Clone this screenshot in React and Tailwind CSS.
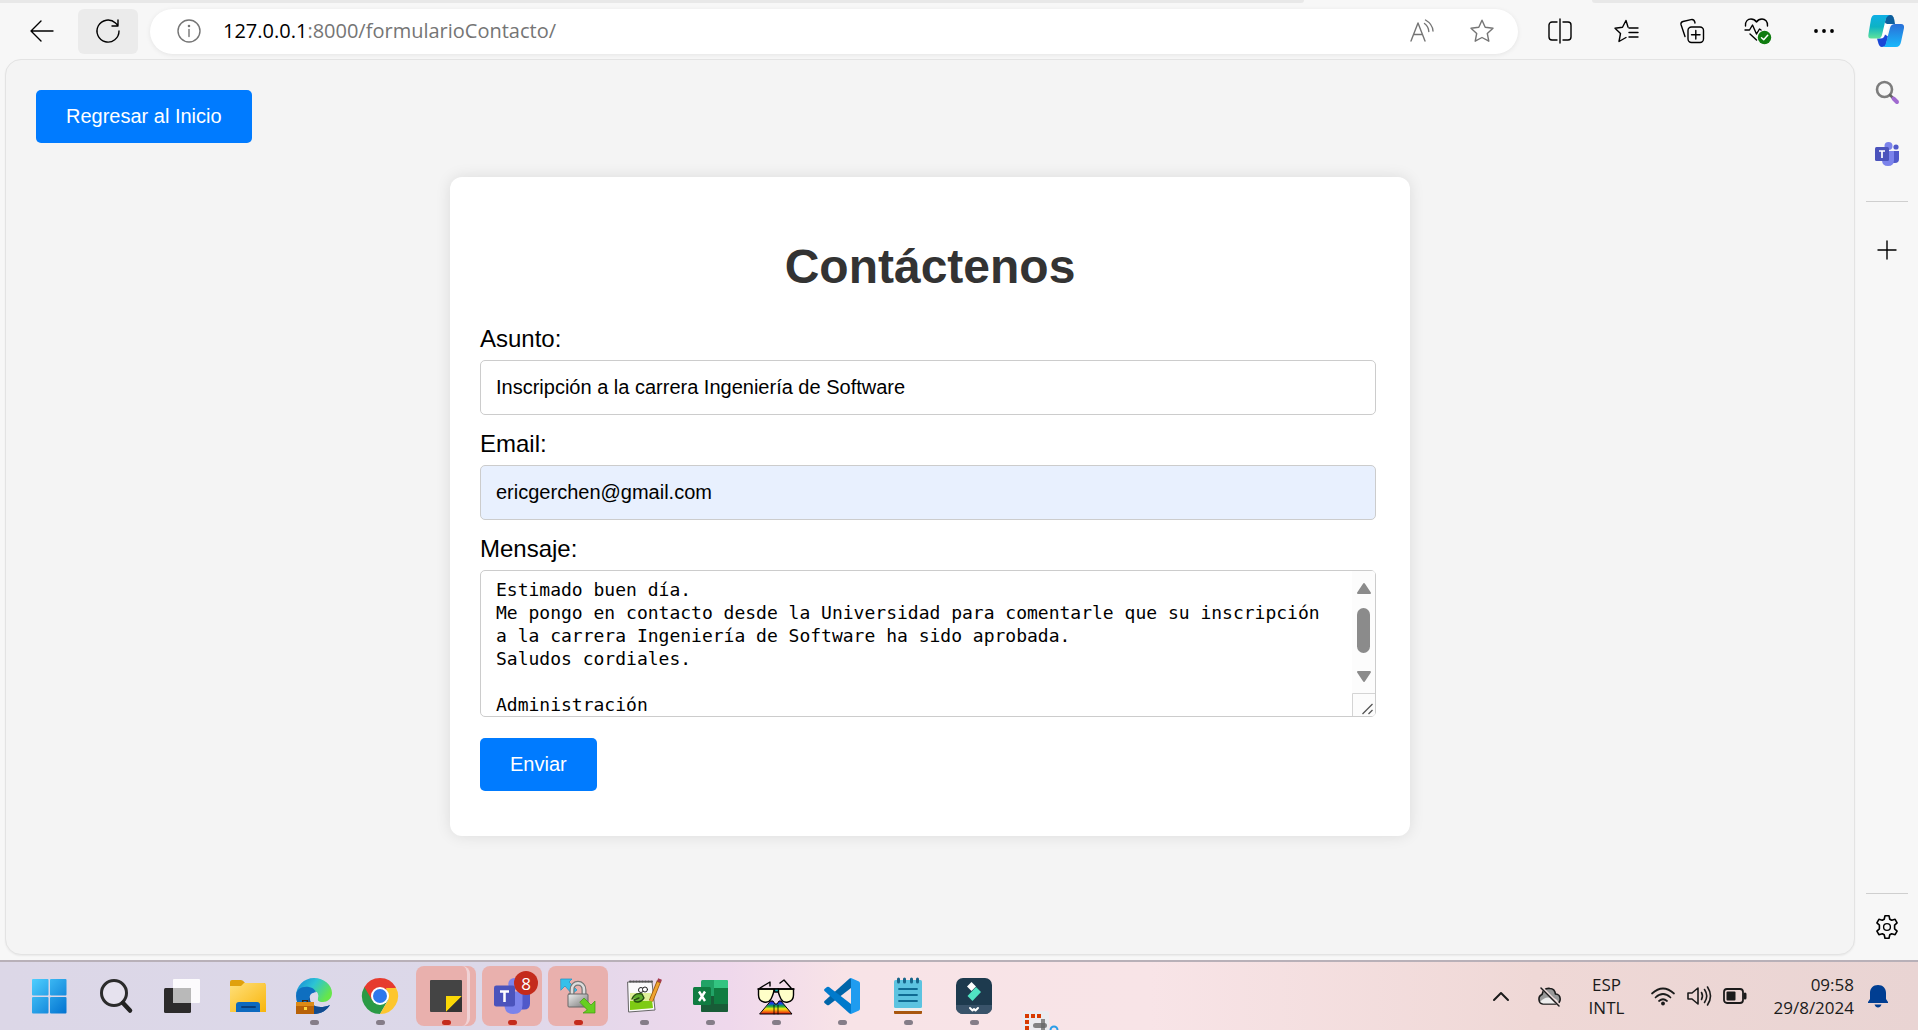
const Svg = ({ size = 24, box = '0 0 24 24', children, className = '' }) => (
  <svg width={size} height={size} viewBox={box} fill="none" stroke="currentColor" strokeWidth="1.4" strokeLinecap="round" strokeLinejoin="round" className={`shrink-0 overflow-visible ${className}`} aria-hidden="true">
    {children}
  </svg>
)

const STAR = 'M12 1.2 15.2 8.3 23 9.2 17.3 14.5 18.8 22.2 12 18.5 5.2 22.2 6.7 14.5 1 9.2 8.8 8.3Z'

const BackIcon = () => <Svg><path d="M23 12H1M11 2 1 12l10 10" /></Svg>
const ReloadIcon = () => <Svg><path d="M23 12A11 11 0 1 1 19.5 4L22 6.5M22 1v6h-6" /></Svg>
const InfoIcon = () => <Svg><circle cx="12" cy="12" r="11" /><path d="M12 10.5v7" /><circle cx="12" cy="7" r=".6" fill="currentColor" /></Svg>
const ReadAloudIcon = () => <Svg><path d="M1 22 8 4l7 18M3.7 15.500h8.600M14.500 4.500q4 3 4.300 8M15.500 1q7 4 7.500 11" /></Svg>
const StarIcon = () => <Svg><path d={STAR} /></Svg>
const SplitIcon = () => <Svg><path d="M12 0v24M9 3H4a3 3 0 0 0-3 3v12a3 3 0 0 0 3 3h5M15 3h5a3 3 0 0 1 3 3v12a3 3 0 0 1-3 3h-5" /></Svg>
const FavoritesIcon = () => <Svg><path d="M14 8 12 1.500 8.500 8.300 1 9.200l5.500 5.300L5 22.500l7-4M15 9h9M15 13.500h9M15 18h9" /></Svg>
const CollectionsIcon = () => <Svg><rect x="8" y="8" width="15.500" height="15.500" rx="3.500" /><path d="M15.800 11.500v8.500M11.500 15.800H20M5 17.500 1 5.500Q.5 3.300 3 2.500L11 .6Q14 0 14.800 3L15 4" /></Svg>
const HealthIcon = () => (
  <Svg size={28} box="0 0 28 28">
    <path d="M1.500 9C1 4 4 2 7 2c3 0 4.500 1.500 5.500 3C13.500 3.500 15 2 18 2s6 2.500 5.500 7M1 13h4.500L8.500 8l4 9 3-5 1.500 1M6 17l6.500 6" />
    <circle cx="20.500" cy="20.500" r="6.700" fill="#107c10" stroke="none" />
    <path d="m17.500 20.800 2.200 2 4-4.500" stroke="#fff" strokeWidth="1.500" />
  </Svg>
)
const DotsIcon = () => <Svg><g fill="currentColor" stroke="none"><circle cx="4" cy="12" r="1.900" /><circle cx="12" cy="12" r="1.900" /><circle cx="20" cy="12" r="1.900" /></g></Svg>
const CopilotIcon = () => (
  <Svg size={36} box="0 0 36 36">
    <defs>
      <linearGradient id="cpA" x1="0" y1="0" x2="0" y2="1"><stop offset="0" stopColor="#0fafe6" /><stop offset=".5" stopColor="#0db3c4" /><stop offset="1" stopColor="#5fe39a" /></linearGradient>
      <linearGradient id="cpB" x1="0" y1="0" x2="0" y2="1"><stop offset="0" stopColor="#2a6fd8" /><stop offset="1" stopColor="#18b8fb" /></linearGradient>
    </defs>
    <g stroke="none">
      <path d="M17 11h6q-2 0-3 4l-3 10.500h-6Z" fill="#fff" />
      <path d="M18 2h5q3 0 4 9h-6q-4 0-4-2Z" fill="#0d5f9e" />
      <path d="M9 25.500h4q3 0 4-4l3 2-2 8q-1 2.500-4 2.500-3 0-4-5Z" fill="#1a47d6" />
      <path d="M6.500 2H22Q18 3 17 9l-3 13q-1 3.500-4 3.500H3Q-.5 25.500.5 21L3 6q1-4 3.500-4Z" fill="url(#cpA)" />
      <path d="M27 11h6q3.500 0 3 4l-3 14q-1 5-5 5H14q3 0 4-4l4-15q1-4 5-4Z" fill="url(#cpB)" />
    </g>
  </Svg>
)
const SideSearchIcon = () => <Svg><circle cx="9.500" cy="9.500" r="7.500" stroke="#7d7d7d" strokeWidth="2.600" /><path d="m15 15 3 3" stroke="#666" strokeWidth="2.500" /><path d="m18.500 18.500 3.500 3.500" stroke="#a06ad0" strokeWidth="4" /></Svg>
const TeamsIcon = ({ size = 24 }) => (
  <Svg size={size}>
    <g stroke="none">
      <circle cx="21" cy="5" r="2.600" fill="#5059c9" /><path d="M16 9h8v8q0 4-4 4h-4Z" fill="#5059c9" />
      <circle cx="13.500" cy="4" r="4" fill="#7b83eb" /><path d="M7 9h12v9q0 6-6 6t-6-6Z" fill="#7b83eb" />
      <rect x="0" y="5" width="14" height="14" rx="1.500" fill="#4b53bc" />
    </g>
    <path d="M4 9h6M7 9v7" stroke="#fff" strokeWidth="1.700" strokeLinecap="butt" />
  </Svg>
)
const PlusIcon = () => <Svg><path d="M12 3v18M3 12h18" /></Svg>
const GearIcon = () => (
  <Svg><circle cx="12" cy="12" r="3.400" /><path strokeWidth="1.600" d="M10 .8h4l.8 3.400 1.900 1.100 3.400-1 2 3.500-2.500 2.400v3.600l2.500 2.400-2 3.500-3.400-1-1.900 1.100L14 23.200h-4l-.8-3.400-1.900-1.100-3.400 1-2-3.500 2.500-2.400v-3.600L1.900 7.800l2-3.500 3.400 1 1.900-1.100Z" /></Svg>
)

const StartIcon = () => (
  <Svg size={36} box="0 0 36 36">
    <defs><linearGradient id="win" gradientUnits="userSpaceOnUse" x1="0" y1="0" x2="36" y2="36"><stop stopColor="#4fd0ff" /><stop offset="1" stopColor="#0070cf" /></linearGradient></defs>
    <g fill="url(#win)" stroke="none"><rect x="0" y="1" width="16.500" height="16.500" rx="1" /><rect x="18" y="1" width="16.500" height="16.500" rx="1" /><rect x="0" y="19" width="16.500" height="16.500" rx="1" /><rect x="18" y="19" width="16.500" height="16.500" rx="1" /></g>
  </Svg>
)
const TaskSearchIcon = () => <Svg size={36} box="0 0 36 36"><circle cx="16" cy="15" r="12.500" stroke="#2b2b2b" strokeWidth="3" fill="#e6e2ee" /><path d="m25 25 7 7.500" stroke="#222" strokeWidth="4.500" /></Svg>
const TaskViewIcon = () => <Svg size={36} box="0 0 36 36"><g stroke="none"><rect x="0" y="10" width="27" height="25" rx="1.500" fill="#2c2b2b" /><rect x="9" y="1" width="27" height="24" rx="1" fill="#fff" opacity=".9" /><path d="M9 10h18v15H9Z" fill="#b9b9b9" /></g></Svg>
const ExplorerIcon = () => (
  <Svg size={36} box="0 0 36 36">
    <defs><linearGradient id="fol" x1="0" y1="0" x2="1" y2="1"><stop stopColor="#ffe07a" /><stop offset="1" stopColor="#f8b50c" /></linearGradient></defs>
    <g stroke="none"><path d="M0 4q0-2 2-2h9q2 0 4 3h20v5H0Z" fill="#e0a10c" /><path d="M0 8h11l3-3h20q2 0 2 2v27H0Z" fill="url(#fol)" /><path d="M6 34V27q0-3 3-3h18q3 0 3 3v7Z" fill="#0c69bf" /></g><path d="M12 29h13" stroke="#083e7c" strokeWidth="2" />
  </Svg>
)
const EdgeIcon = () => (
  <Svg size={36} box="0 0 36 36">
    <defs><linearGradient id="edg" x1="0" y1="0" x2="1" y2=".5"><stop stopColor="#1683d8" /><stop offset=".5" stopColor="#2cc3d5" /><stop offset="1" stopColor="#66e64a" /></linearGradient></defs>
    <g stroke="none">
      <path d="M0 18C0 8 8 0 18 0s18 7 18 15c0 6-5 9-9 9-5 0-6-2-5-4 1-3-1-8-8-9C6 10 0 14 0 18Z" fill="url(#edg)" />
      <path d="M0 18c0-7 6-10 13-9 5 1 7 4 7 6-5-1-7 3-6 6 0 6 8 11 20 6-3 5-9 9-16 9C8 36 0 28 0 18Z" fill="#0f6fc0" />
      <path d="M14 19c-2 8 8 13 20 8-3 5-9 9-16 9-5-3-8-11-4-17Z" fill="#114b8f" />
      <path d="M21 14c-4 0-6 3-5 6 1 3 4 5 8 5q-3-2-2-5 1-3-1-6Z" fill="#ded9e9" />
      <rect x="0" y="24" width="18" height="12" fill="#b86208" /><rect x="0" y="24" width="18" height="4" fill="#dd8a15" /><rect x="8" y="29" width="3" height="3" fill="#ffd63c" />
      <path d="M6 24v-2h6v2h-1.500v-1h-3v1Z" fill="#3c2411" />
    </g>
  </Svg>
)
const ChromeIcon = () => (
  <Svg size={36} box="0 0 36 36">
    <g stroke="none">
      <path d="M18 18 2.400 9A18 18 0 0 1 33.600 9Z" fill="#e63b2e" /><path d="M2.400 9A18 18 0 0 0 18 36l8-14-8-4Z" fill="#2a9a45" /><path d="M33.600 9A18 18 0 0 1 18 36l8-13.500L24 9Z" fill="#fdc62d" />
      <path d="M2.400 9 10.200 22.500 18 10h15.600V9L18 4Z" fill="#e63b2e" /><circle cx="18" cy="18" r="9" fill="#fff" /><circle cx="18" cy="18" r="7" fill="#2f78ec" />
    </g>
  </Svg>
)
const StickyIcon = () => <Svg size={36} box="0 0 36 36"><g stroke="none"><rect x="2" y="2" width="32" height="32" rx="1" fill="#444" /><path d="M18 18h16L18 34Z" fill="#fbd806" /><path d="M34 18v16H18Z" fill="#333" /></g></Svg>
const LockIcon = () => (
  <Svg size={36} box="0 0 36 36">
    <defs><linearGradient id="lck" x1="0" y1="0" x2="1" y2="1"><stop stopColor="#eee" /><stop offset="1" stopColor="#777" /></linearGradient></defs>
    <path d="M1 1h11L9 4l8 8-5 4-7-8-4 4Z" fill="#35c0ea" stroke="#1a91c4" strokeWidth=".7" />
    <path d="M12 17v-5c0-9 12-9 12 0v5" stroke="#777" strokeWidth="5" /><path d="M12 17v-5c0-9 12-9 12 0v5" stroke="#ddd" strokeWidth="2.500" />
    <rect x="8" y="16" width="20" height="13" rx="1" fill="url(#lck)" stroke="#666" strokeWidth="1" />
    <path d="m20 24 4-4 7 7 4-4v12H23l4-3Z" fill="#66cf20" stroke="#409810" strokeWidth=".7" />
  </Svg>
)
const NotepadPlusIcon = () => (
  <Svg size={36} box="0 0 36 36">
    <path d="M2 4h24l3 28-26 2Z" fill="#fafafa" stroke="#666" strokeWidth="1" /><path d="M4 3.500h22" stroke="#555" strokeWidth="2" strokeDasharray="1 2" />
    <path d="M4 15h21l2 15-23 2Z" fill="#dff09a" stroke="none" /><path d="M4 23h22l1 7-23 2Z" fill="#7ecb14" stroke="none" />
    <path d="M6 21c2-5 6-6 10-5l2 4c-3 5-9 5-10 2l5-2" fill="#5fae2c" stroke="#264d10" />
    <circle cx="15" cy="12" r="2.500" fill="#fff" stroke="#222" strokeWidth="1" /><circle cx="19" cy="11.500" r="2.500" fill="#fff" stroke="#222" strokeWidth="1" />
    <path d="M33 3 25 23" stroke="#9a5a10" strokeWidth="4.500" strokeLinecap="butt" /><path d="M32.500 4.500 25 23" stroke="#f0a530" strokeWidth="2.800" strokeLinecap="butt" /><path d="m34 1-1 3" stroke="#a43b4c" strokeWidth="4" strokeLinecap="butt" />
  </Svg>
)
const ExcelIcon = () => (
  <Svg size={36} box="0 0 36 36">
    <g stroke="none"><rect x="9" y="2" width="27" height="32" rx="1.500" fill="#21a366" /><path d="M22 2h12.500q1.500 0 1.500 1.500V10H22Z" fill="#33c481" /><path d="M9 18h13v8H9ZM22 10h14v8H22Z" fill="#107c41" /><path d="M9 18h27v14.500q0 1.500-1.500 1.500h-24Q9 34 9 32.500Z" fill="#185c37" /><path d="M22 18h14v8H22Z" fill="#107c41" /><rect x="1" y="9" width="18" height="18" rx="1.500" fill="#107c41" /></g>
    <path d="m7 13.500 6 9.500M13 13.500 7 23" stroke="#fff" strokeWidth="2.400" strokeLinecap="butt" />
  </Svg>
)
const GlassesIcon = () => (
  <Svg size={36} box="0 0 36 36">
    <defs><linearGradient id="rain" x1="0" y1="0" x2="0" y2="1"><stop stopColor="#4b12b8" /><stop offset=".2" stopColor="#1247e8" /><stop offset=".4" stopColor="#18a83a" /><stop offset=".6" stopColor="#f5ea14" /><stop offset=".8" stopColor="#f47a10" /><stop offset="1" stopColor="#e01010" /></linearGradient></defs>
    <path d="M.5 11H16q0 4-3 10-2 4-7 3-5.500-1-5.500-7ZM20 11h15.500v6q0 6-5.500 7-5 1-7-3-3-6-3-10Z" fill="#ffffc8" stroke="#000" /><path d="M0 11h36M2 10 12 4v4M33 10 26 2l-4 3" stroke="#000" />
    <rect x="16.500" y="11" width="4" height="3" fill="#1bb" stroke="#000" />
    <path d="M13 23h2l2 3h2l2-3h2l11 13H2Z" fill="url(#rain)" stroke="#000" strokeWidth="1" /><path d="M16 27v9M20 27v9" stroke="#000" strokeWidth=".8" />
  </Svg>
)
const VsCodeIcon = () => <Svg size={36} box="0 0 36 36"><g stroke="none"><path d="M27 0v10L5 27q-1 .5-2 0l-2.500-2q-1-1 0-2L25 1Z" fill="#0065a9" /><path d="M27 36V26L5 9q-1-.5-2 0L.5 11q-1 1 0 2L25 35Z" fill="#007acc" /><path d="m27 0 8 3.500q1 .5 1 2v25q0 1.500-1 2L27 36q-1 0-2-1 2 1 2-1V2q0-2-2-1 1-1 2-1Z" fill="#1f9cf0" /></g></Svg>
const NotepadIcon = () => <Svg size={36} box="0 0 36 36"><g stroke="none"><rect x="4" y="28" width="28" height="8" rx="1" fill="#a9560e" /><rect x="4" y="27" width="28" height="6" fill="#eee" /><rect x="4" y="2" width="28" height="28" rx="1.500" fill="#5cc3e0" /></g><path d="M9 11h18M9 17h18M9 23h18" stroke="#0f6b93" strokeWidth="1.800" /><path d="M8.500 1v3M14.500 1v3M21.500 1v3M27.500 1v3" stroke="#17658a" strokeWidth="3" /></Svg>
const FilmoraIcon = () => <Svg size={36} box="0 0 36 36"><g stroke="none"><rect width="36" height="36" rx="7" fill="#1d3a4e" /><path d="M0 27h36v2a7 7 0 0 1-7 7H7a7 7 0 0 1-7-7Z" fill="#39536a" /><path d="m11 8.500 4.500-4.500L20 8.500 15.500 13Z" fill="#fff" /><path d="m11.500 18 8.500-9 5 5-8.500 9Z" fill="#50e3c2" /></g><path d="m14 30 2.500 2.500L18 31l1.500 1.500L22 30" stroke="#fff" strokeWidth="2" /></Svg>
const SnipIcon = () => <Svg size={36} box="0 0 36 36"><rect x="0" y="0" width="27" height="30" rx="2" fill="#ebebef" stroke="none" /><path d="M3 5h17" stroke="#d83b01" strokeWidth="4" strokeDasharray="4 2" strokeLinecap="butt" /><path d="M5 9v12" stroke="#d83b01" strokeWidth="4" strokeDasharray="4 2" strokeLinecap="butt" /><path d="M21 8v14" stroke="#888" strokeWidth="4" strokeLinecap="butt" /><circle cx="32" cy="19" r="3.500" stroke="#2b9de8" strokeWidth="2" /></Svg>

const ChevronIcon = () => <Svg size={18} box="0 0 18 18"><path d="m2 13 7-7 7 7" strokeWidth="2" /></Svg>
const CloudOffIcon = () => <Svg><path d="M6 20a5 5 0 0 1-1-9.500C6 6 9 4 13 4.500c3 0 5 2.500 5.500 5.500 6 0 6.500 10 0 10Z" fill="#999" stroke="#1b1b1b" strokeWidth="1.600" /><path d="M3 18q5-6 11-4 6 0 7 4-1 1.500-3 1.500H6Z" fill="#eee" stroke="none" /><path d="m5 4 17 17" stroke="#eddada" strokeWidth="3" /><path d="m4 4 18 18" stroke="#1b1b1b" strokeWidth="1.500" /></Svg>
const WifiIcon = () => <Svg><path strokeWidth="1.700" d="M1 9.500q11-10 22 0M4.500 13.500q7.500-7 15 0M8 17q4-3.500 8 0" /><circle cx="12" cy="19.500" r="1.900" fill="currentColor" stroke="none" /></Svg>
const VolumeIcon = () => <Svg><path strokeWidth="1.600" d="M1 9v6h4l6 5V4L5 9ZM14.500 8.500q2 3.500 0 7M17.500 5.500q4.500 6.500 0 13M20.500 3q6 9 0 18" /></Svg>
const BatteryIcon = () => <Svg><rect x="1" y="5" width="19" height="14" rx="3" strokeWidth="1.800" /><rect x="3.500" y="7.500" width="9" height="9" rx="1" fill="currentColor" stroke="none" /><path d="M22 10v4" strokeWidth="3" /></Svg>
const BellIcon = () => <Svg className="text-[#003e92]"><g fill="currentColor" stroke="none"><path d="M12 1c5 0 8 3.500 8 8v6l2 3v1H2v-1l2-3V9c0-4.500 3-8 8-8Z" /><path d="M8.500 20.500h7q-1 3-3.500 3t-3.500-3Z" /></g></Svg>

const toolbarItems = [
  ['Pantalla dividida', SplitIcon],
  ['Favoritos', FavoritesIcon],
  ['Colecciones', CollectionsIcon],
  ['Estado del explorador', HealthIcon],
  ['Configuración y más', DotsIcon],
]

const taskItems = [
  { name: 'Inicio', Icon: StartIcon },
  { name: 'Buscar', Icon: TaskSearchIcon },
  { name: 'Vista de tareas', Icon: TaskViewIcon },
  { name: 'Explorador de archivos', Icon: ExplorerIcon },
  { name: 'Edge', Icon: EdgeIcon, open: true },
  { name: 'Chrome', Icon: ChromeIcon, open: true },
  { name: 'Notas', Icon: StickyIcon, open: true, alert: true, stacked: true },
  { name: 'Teams', Icon: () => <TeamsIcon size={36} />, open: true, alert: true, badge: '8' },
  { name: 'Conexión segura', Icon: LockIcon, open: true, alert: true },
  { name: 'Notepad++', Icon: NotepadPlusIcon, open: true },
  { name: 'Excel', Icon: ExcelIcon, open: true },
  { name: 'Lector', Icon: GlassesIcon, open: true },
  { name: 'Visual Studio Code', Icon: VsCodeIcon, open: true },
  { name: 'Bloc de notas', Icon: NotepadIcon, open: true },
  { name: 'Filmora', Icon: FilmoraIcon, open: true },
]

const MESSAGE = `Estimado buen día.
Me pongo en contacto desde la Universidad para comentarle que su inscripción a la carrera Ingeniería de Software ha sido aprobada.
Saludos cordiales.

Administración`

function Toolbar() {
  return (
    <header className="flex h-14 items-center pl-3">
      <button aria-label="Atrás" className="flex h-[45px] w-[60px] items-center justify-center"><BackIcon /></button>
      <button aria-label="Actualizar" className="ml-1.5 flex h-[45px] w-[60px] items-center justify-center rounded-md bg-[#ebebeb]"><ReloadIcon /></button>
      <div className="ml-3 flex h-[45px] min-w-0 flex-1 items-center rounded-full bg-white pr-6 pl-[27px] text-[#757575] shadow-[0_1px_5px_rgba(0,0,0,0.08)]">
        <InfoIcon />
        <div className="ml-[22px] flex-1 font-['Open_Sans',sans-serif] text-[20px] leading-6"><span className="text-black">127.0.0.1</span>:8000/formularioContacto/</div>
        <button aria-label="Leer en voz alta"><ReadAloudIcon /></button>
        <button aria-label="Agregar a favoritos" className="ml-9"><StarIcon /></button>
      </div>
      <div className="ml-3 flex gap-1.5">
        {toolbarItems.map(([name, Icon]) => (
          <button key={name} aria-label={name} className="flex h-[45px] w-[60px] items-center justify-center"><Icon /></button>
        ))}
      </div>
      <button aria-label="Copilot" className="flex h-[45px] w-[64px] items-center justify-center"><CopilotIcon /></button>
    </header>
  )
}

function Sidebar() {
  return (
    <aside className="flex w-[63px] flex-col items-center pt-[21px] pb-4">
      <button aria-label="Buscar en la barra lateral"><SideSearchIcon /></button>
      <button aria-label="Teams" className="mt-[38px]"><TeamsIcon /></button>
      <hr className="mt-[35px] w-[42px] border-[#cfcfcf]" />
      <button aria-label="Agregar" className="mt-9"><PlusIcon /></button>
      <hr className="mt-auto w-[42px] border-[#cfcfcf]" />
      <button aria-label="Configuración" className="mt-[21px]"><GearIcon /></button>
    </aside>
  )
}

function TextField({ id, label, type = 'text', value, className }) {
  return (
    <>
      <label htmlFor={id} className="text-2xl leading-7">{label}</label>
      <input id={id} type={type} defaultValue={value} className={`mt-[7px] mb-[15px] h-[55px] rounded-[5px] border border-[#ccc] px-[15px] text-[20px] outline-none ${className}`} />
    </>
  )
}

function ContactForm() {
  return (
    <form onSubmit={(e) => e.preventDefault()} className="mx-auto mt-[34px] flex w-full max-w-[960px] flex-col rounded-xl bg-white pt-[62px] pr-[34px] pb-[45px] pl-[30px] shadow-[0_0_15px_rgba(0,0,0,0.1)]">
      <h1 className="mb-[30px] ml-1 text-center text-[48px] leading-[56px] font-bold text-[#333]">Contáctenos</h1>
      <TextField id="asunto" label="Asunto:" value="Inscripción a la carrera Ingeniería de Software" className="bg-white" />
      <TextField id="email" label="Email:" type="email" value="ericgerchen@gmail.com" className="bg-[#e8f0fe]" />
      <label htmlFor="mensaje" className="text-2xl leading-7">Mensaje:</label>
      <div className="relative mt-[7px] flex">
        <textarea id="mensaje" defaultValue={MESSAGE} className="h-[147px] w-full resize-none overflow-hidden rounded-[5px] border border-[#ccc] pt-[7px] pr-[42px] pl-[15px] font-['DejaVu_Sans_Mono',monospace] text-[18px] leading-[23px] outline-none" />
        <svg className="absolute top-px right-px" width="23" height="145" viewBox="0 0 23 145" aria-hidden="true">
          <path d="M0 0h20q3 0 3 3v139q0 3-3 3H0Z" fill="#fcfcfc" />
          <path d="M12 13 18 22H6ZM12 110 18 101H6Z" fill="#8b8b8b" stroke="#8b8b8b" strokeWidth="2" strokeLinejoin="round" />
          <rect x="5" y="37" width="13" height="45" rx="6.500" fill="#8b8b8b" />
          <path d="M.5 145V122.500H23" fill="none" stroke="#d4d4d4" />
          <path d="m10.500 143 10-10M16.500 143l4-4" stroke="#555" strokeWidth="1.300" />
        </svg>
      </div>
      <button type="submit" className="mt-[21px] self-start rounded-[5px] bg-[#007bff] px-[30px] text-[20px] leading-[53px] text-white">Enviar</button>
    </form>
  )
}

function TaskButton({ name, Icon, open, alert, stacked, badge }) {
  return (
    <button aria-label={name} className={`relative flex h-[60px] w-[60px] shrink-0 items-center justify-center rounded-lg ${alert ? 'bg-[#e9b0ad]' : ''}`}>
      {stacked && <span className="absolute inset-y-0 left-0 w-[54px] rounded-lg border-r-3 border-[#f0d3d6]" />}
      <Icon />
      {badge && <span className="absolute top-[5px] right-1 flex size-6 items-center justify-center rounded-full bg-[#c42b1c] font-['Open_Sans',sans-serif] text-[17px] leading-none text-white">{badge}</span>}
      {open && <span className={`absolute bottom-px left-[26px] h-[5px] w-[9px] rounded-full ${alert ? 'bg-[#c42b1c]' : 'bg-[#857d88]'}`} />}
    </button>
  )
}

function Taskbar() {
  return (
    <footer className="flex h-[70px] shrink-0 items-start justify-between overflow-hidden border-t-2 border-[#b8b0b8] bg-[linear-gradient(90deg,#dcd7e7_0%,#dcd8e9_25%,#efd8ec_38%,#f8e3e7_44%,#f8e4e7_60%,#efd8d6_80%,#e9d4d3_100%)] pt-1 pl-5 font-['Open_Sans',sans-serif] text-[#1b1b1b]">
      <nav className="flex gap-1.5">
        {taskItems.map((item) => <TaskButton key={item.name} {...item} />)}
        <button aria-label="Recortes" className="relative mt-[45px] ml-3 flex h-9"><SnipIcon /><span className="absolute top-3 left-[11px] h-[5px] w-[14px] rounded-full bg-[#666]/80" /></button>
      </nav>
      <div className="flex h-[60px] items-center pr-7 text-[17px] leading-[23px]">
        <button aria-label="Mostrar iconos ocultos"><ChevronIcon /></button>
        <span className="ml-[27px]"><CloudOffIcon /></span>
        <button className="ml-[27px] w-9 text-center">ESP INTL</button>
        <button aria-label="Red, volumen y batería" className="ml-[27px] flex gap-3"><WifiIcon /><VolumeIcon /><BatteryIcon /></button>
        <time className="ml-[26px] flex flex-col text-right"><span>09:58</span><span>29/8/2024</span></time>
        <button aria-label="Notificaciones" className="ml-3"><BellIcon /></button>
      </div>
    </footer>
  )
}

export default function App() {
  return (
    <div className="flex h-screen flex-col overflow-hidden bg-[#f7f7f7] font-['Liberation_Sans',Arial,sans-serif] text-black">
      <div className="flex h-[3px] shrink-0 justify-between">
        <span className="w-[68%] rounded-br-full bg-[#e8e8e8]" />
        <span className="w-[17%] rounded-bl-full bg-[#e8e8e8]" />
      </div>
      <Toolbar />
      <div className="flex min-h-0 flex-1 pb-[5px] pl-[5px]">
        <main className="flex-1 rounded-2xl border border-[#e3e3e3] bg-[#f4f4f4] px-[30px] pt-[30px] shadow-[0_1px_2px_rgba(0,0,0,0.06)]">
          <a href="#inicio" className="inline-block rounded-[5px] bg-[#007bff] px-[30px] text-[20px] leading-[53px] text-white">Regresar al Inicio</a>
          <ContactForm />
        </main>
        <Sidebar />
      </div>
      <Taskbar />
    </div>
  )
}
